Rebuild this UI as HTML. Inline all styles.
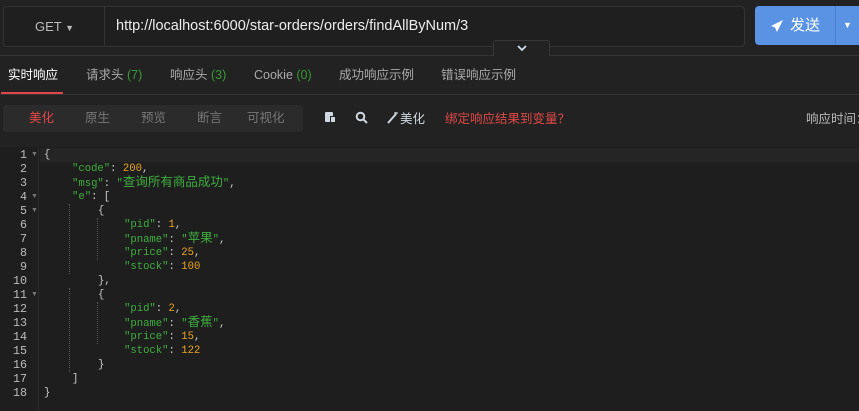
<!DOCTYPE html>
<html><head><meta charset="utf-8"><style>
*{margin:0;padding:0;box-sizing:border-box}
body{width:859px;height:411px;background:#222;overflow:hidden;position:relative;font-family:"Liberation Sans","Noto Sans CJK SC",sans-serif;color:#ccc}
.abs{position:absolute}
.get{left:3px;top:6px;width:102px;height:41px;border:1px solid #333;border-right:none;border-radius:4px 0 0 4px;background:#1f1f1f;color:#bbb;font-size:13px;line-height:39px;text-align:center}
.url{left:104px;top:6px;width:641px;height:41px;border:1px solid #333;border-radius:0 4px 4px 0;background:#1f1f1f;color:#eee;font-size:14.5px;line-height:39px;padding-left:11px}
.send{left:755px;top:6px;width:104px;height:39px;background:#5a93e4;border-radius:4px 0 0 4px;color:#fff;font-size:15px;line-height:39px}
.tabline{left:0;top:55px;width:859px;height:1px;background:#333}
.tabline2{left:0;top:94px;width:859px;height:1px;background:#333}
.tab{top:66px;font-size:12.5px;line-height:18px;height:18px;color:#aaa;white-space:nowrap}
.tab .g{color:#3a9a3a}
.seg{left:3px;top:105px;width:300px;height:27px;background:#2b2b2b;border-radius:3px}
.seg span{position:absolute;top:5px;font-size:12.5px;line-height:16px;color:#777}
.ed{left:0;top:147px;width:859px;height:264px;background:#1e1e1e}
.gut{left:0;top:147px;width:39px;height:264px;background:#1e1e1e;border-right:1px solid #2a2a2a}
.code{position:absolute;left:0;top:148px;font-family:"Liberation Mono",monospace;font-size:10.6px;color:#ccc}
.code div{height:14px;line-height:14px;white-space:pre;overflow:visible}
.c{font-family:"Noto Sans CJK SC",sans-serif;font-size:12.5px;line-height:10px}
.ln{position:absolute;left:0;top:148px;width:27px;text-align:right;font-family:"Liberation Mono",monospace;font-size:11.7px;line-height:14px;color:#bbb}
.k{color:#3fae3f}.n{color:#eaa520}
.l0{padding-left:44px}.l1{padding-left:72px}.l2{padding-left:98px}.l3{padding-left:124px}
</style></head><body>
<div class="abs get">GET <span style="font-size:9px">▼</span></div>
<div class="abs url">http://localhost:6000/star-orders/orders/findAllByNum/3</div>
<div class="abs send"><svg style="position:absolute;left:15px;top:13px" width="14" height="14"><path d="M13 1L1 7l4 1.5L7 13z" fill="#fff"/></svg><span style="position:absolute;left:35px">发送</span></div>
<div class="abs" style="left:835px;top:6px;width:24px;height:39px;background:#5a93e4;border-left:1px solid #4a80cc;color:#fff;font-size:9px;line-height:39px;text-align:center">▼</div>
<div class="abs tabline"></div>
<div class="abs" style="left:493px;top:40px;width:57px;height:16px;background:#222;border:1px solid #383838;border-bottom:none;border-radius:3px 3px 0 0"><svg style="position:absolute;left:23px;top:4px" width="10" height="7"><path d="M1 1l4 4 4-4" stroke="#cde" stroke-width="1.8" fill="none"/></svg></div>
<div class="abs tab" style="left:8px;color:#fff">实时响应</div>
<div class="abs" style="left:1px;top:92px;width:62px;height:2px;background:#e04848"></div>
<div class="abs tab" style="left:86px">请求头 <span class="g">(7)</span></div>
<div class="abs tab" style="left:170px">响应头 <span class="g">(3)</span></div>
<div class="abs tab" style="left:254px">Cookie <span class="g">(0)</span></div>
<div class="abs tab" style="left:339px">成功响应示例</div>
<div class="abs tab" style="left:441px">错误响应示例</div>
<div class="abs tabline2"></div>
<div class="abs seg"><span style="left:26px;color:#e04848">美化</span><span style="left:82px">原生</span><span style="left:138px">预览</span><span style="left:194px">断言</span><span style="left:244px">可视化</span></div>
<div class="abs" style="left:325px;top:112px;width:8px;height:10px;background:#cfd8e0;border-radius:1px"></div>
<div class="abs" style="left:330px;top:116px;width:6px;height:7px;background:#cfd8e0;border:1px solid #222"></div>
<svg class="abs" style="left:355px;top:111px" width="14" height="14"><circle cx="5.5" cy="5.5" r="3.8" stroke="#cfd8e0" stroke-width="2" fill="none"/><path d="M8.3 8.3L12 12" stroke="#cfd8e0" stroke-width="2"/></svg>
<svg class="abs" style="left:387px;top:111px" width="12" height="14"><path d="M1 12L9 3" stroke="#cfd8e0" stroke-width="2"/><path d="M9 1v3M7 2h4" stroke="#cfd8e0" stroke-width="1"/></svg>
<div class="abs" style="left:400px;top:111px;font-size:12.5px;line-height:16px;color:#cfd8e0">美化</div>
<div class="abs" style="left:445px;top:111px;font-size:12.5px;line-height:16px;color:#e04848">绑定响应结果到变量？</div>
<div class="abs" style="left:806px;top:111px;font-size:12.5px;line-height:16px;color:#bbb;white-space:nowrap">响应时间：</div>
<div class="abs ed"></div>
<div class="abs gut"></div>
<div class="abs" style="left:40px;top:148px;width:819px;height:14px;background:#252525"></div>
<div class="ln">1<br>2<br>3<br>4<br>5<br>6<br>7<br>8<br>9<br>10<br>11<br>12<br>13<br>14<br>15<br>16<br>17<br>18</div>
<div class="abs" style="left:31px;top:148px;font-size:7px;line-height:14px;color:#777">▼<br><br><br>▼<br>▼<br><br><br><br><br><br>▼</div>
<div class="abs" style="left:69px;top:204px;height:70px;border-left:1px dotted #555"></div>
<div class="abs" style="left:97px;top:218px;height:42px;border-left:1px dotted #555"></div>
<div class="abs" style="left:69px;top:288px;height:84px;border-left:1px dotted #555"></div>
<div class="abs" style="left:97px;top:302px;height:42px;border-left:1px dotted #555"></div>
<div class="code"><div class="l0">{</div><div class="l1"><span class="k">"code"</span>: <span class="n">200</span>,</div><div class="l1"><span class="k">"msg"</span>: <span class="k">"<span class="c">查询所有商品成功</span>"</span>,</div><div class="l1"><span class="k">"e"</span>: [</div><div class="l2">{</div><div class="l3"><span class="k">"pid"</span>: <span class="n">1</span>,</div><div class="l3"><span class="k">"pname"</span>: <span class="k">"<span class="c">苹果</span>"</span>,</div><div class="l3"><span class="k">"price"</span>: <span class="n">25</span>,</div><div class="l3"><span class="k">"stock"</span>: <span class="n">100</span></div><div class="l2">},</div><div class="l2">{</div><div class="l3"><span class="k">"pid"</span>: <span class="n">2</span>,</div><div class="l3"><span class="k">"pname"</span>: <span class="k">"<span class="c">香蕉</span>"</span>,</div><div class="l3"><span class="k">"price"</span>: <span class="n">15</span>,</div><div class="l3"><span class="k">"stock"</span>: <span class="n">122</span></div><div class="l2">}</div><div class="l1">]</div><div class="l0">}</div></div>
</body></html>
